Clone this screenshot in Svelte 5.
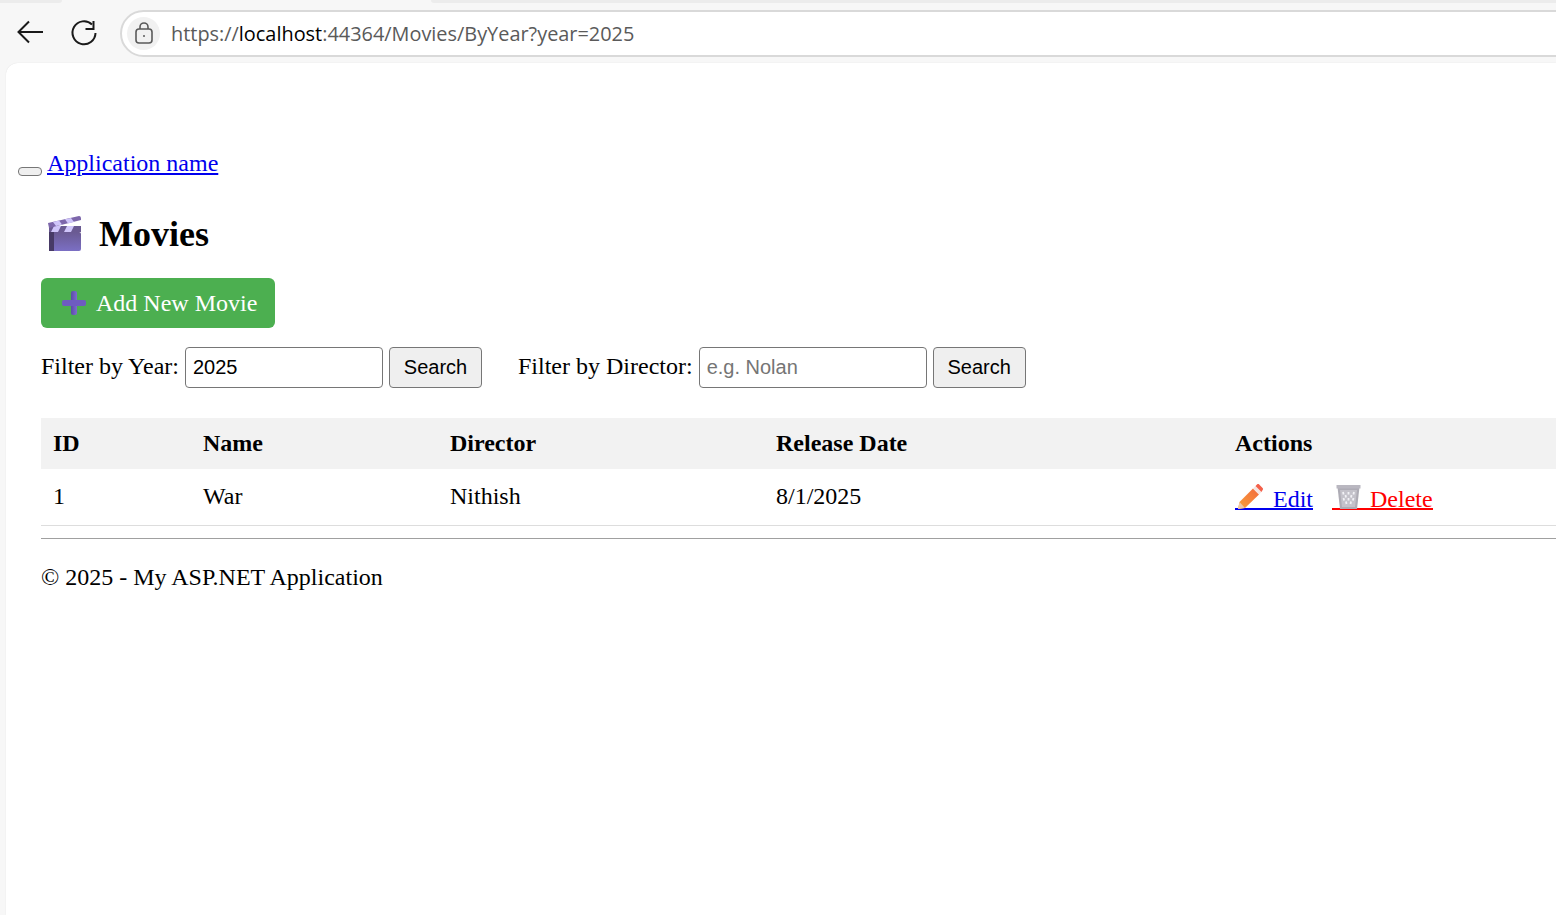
<script>
	const movies = [{ id: 1, name: "War", director: "Nithish", released: "8/1/2025" }];
</script>

<div class="window">
	<div class="tabstrip">
		<span class="tab first"></span>
		<span class="tab second"></span>
	</div>
	<div class="toolbar">
		<svg class="tool back" width="28" height="28" viewBox="0 0 28 28" fill="none" stroke="#1a1a1a" stroke-width="2">
			<path d="M27 13H3M13 2.500 2.500 13 13 23.500" />
		</svg>
		<svg class="tool reload" width="28" height="28" viewBox="0 0 28 28" fill="none" stroke="#1a1a1a" stroke-width="2">
			<path d="M22 5.500A11.500 11.500 0 1 0 25.500 14" />
			<path d="M23.500 2v8h-8" />
		</svg>
		<div class="address">
			<span class="lock">
				<svg width="20" height="22" viewBox="0 0 20 22" fill="none" stroke="#5a5a5a" stroke-width="1.6">
					<rect x="2" y="7" width="16" height="14" rx="3" />
					<path d="M6 7V5a4 4 0 0 1 8 0v2" />
					<circle cx="10" cy="14" r="1" fill="#5a5a5a" stroke="none" />
				</svg>
			</span>
			<span class="url">https://<b>localhost</b>:44364/Movies/ByYear?year=2025</span>
		</div>
	</div>

	<div class="page">
		<nav>
			<button class="toggle" aria-label="Toggle navigation"></button>
			<a href="#home">Application name</a>
		</nav>

		<main>
			<h1>
				<svg width="36" height="38" viewBox="0 0 36 38">
					<defs>
						<linearGradient id="board" x1="0" y1="0" x2="0" y2="1">
							<stop offset="0" stop-color="#6a5a92" />
							<stop offset="1" stop-color="#7b6fc4" />
						</linearGradient>
					</defs>
					<rect x="2" y="17" width="32" height="19" rx="2" fill="url(#board)" />
					<rect x="2" y="17" width="5" height="19" fill="#473a66" />
					<rect x="2" y="11" width="32" height="6" fill="#6a5a92" />
					<path d="M7 11h7l-3 6H4zM20 11h7l-3 6h-7z" fill="#cfc5fa" />
					<path d="M1 8 32 1c1.500 0 2 1 2 3v1L2 13z" fill="#7d67ab" />
					<path d="M6 7l6-1.400 3 4-6 1.500zM18 4.300l6-1.400 3 4-6 1.500z" fill="#cfc5fa" />
				</svg>
				<span>Movies</span>
			</h1>

			<a class="add" href="#add">
				<svg width="26" height="26" viewBox="0 0 26 26">
					<defs>
						<linearGradient id="plus" x1="0" y1="0" x2="1" y2="0">
							<stop offset="0" stop-color="#5b4ba6" />
							<stop offset="1" stop-color="#7d6bd0" />
						</linearGradient>
					</defs>
					<rect x="10" y="1" width="6" height="24" rx="2" fill="url(#plus)" />
					<rect x="1" y="10" width="24" height="6" rx="2" fill="#6e5cc0" />
				</svg>
				Add New Movie
			</a>

			<div class="filters">
				<form>
					<label for="year">Filter by Year:</label>
					<input id="year" class="year" value="2025" />
					<button type="button">Search</button>
				</form>
				<form>
					<label for="director">Filter by Director:</label>
					<input id="director" class="director" placeholder="e.g. Nolan" />
					<button type="button">Search</button>
				</form>
			</div>

			<table>
				<colgroup>
					<col class="c-id" /><col class="c-name" /><col class="c-director" /><col class="c-date" /><col class="c-actions" />
				</colgroup>
				<thead>
					<tr>
						<th>ID</th>
						<th>Name</th>
						<th>Director</th>
						<th>Release Date</th>
						<th>Actions</th>
					</tr>
				</thead>
				<tbody>
					{#each movies as movie}
						<tr>
							<td>{movie.id}</td>
							<td>{movie.name}</td>
							<td>{movie.director}</td>
							<td>{movie.released}</td>
							<td class="actions">
								<a class="edit" href="#edit">
									<svg width="32" height="26" viewBox="0 0 32 26">
										<defs>
											<linearGradient id="pencil" x1="0" y1="1" x2="1" y2="0">
												<stop offset="0" stop-color="#f9a13a" />
												<stop offset="1" stop-color="#f26a3d" />
											</linearGradient>
										</defs>
										<path d="M3 25l1.500-7L18 4.500l6 6L10 24z" fill="url(#pencil)" />
										<path d="M3 25l1.500-7 5.500 6z" fill="#eec8a8" />
										<path d="M18 4.500l2.500-2.500 6 6L24 10.500z" fill="#f5e4e0" />
										<path d="M20.500 2l1.500-1.500c.8-.6 1.500-.6 2.200 0l3.400 3.400c.6.700.6 1.500 0 2.200L26.500 8z" fill="#f4604a" />
									</svg>
									Edit</a>
								<a class="delete" href="#delete">
									<svg width="32" height="26" viewBox="1 0 32 26">
										<path d="M6.500 3h22l-2.500 22H9z" fill="#aeacb5" />
										<path d="M9 6h17l-2 17H11z" fill="#c4c2ca" />
										<path d="M5.500 1h24v3.500h-24z" fill="#b9b7c0" />
										<path d="M12 8l.6 2.500M17.500 8v2.500M23 8l-.6 2.500M14.500 11l.5 2.500M20.500 11l-.5 2.500M12.500 14l.6 2.500M17.500 14v2.500M22.500 14l-.6 2.500M15 17.500l.5 2.500M20 17.500l-.5 2.500" stroke="#f2f2f6" stroke-width="1.800" />
									</svg>
									Delete</a>
							</td>
						</tr>
					{/each}
				</tbody>
			</table>

			<hr />
			<footer>© 2025 - My ASP.NET Application</footer>
		</main>
	</div>
</div>

<style>
	:global(body) {
		margin: 0;
		overflow: hidden;
		background: #f7f7f7;
	}
	.window {
		height: 915px;
		width: 1556px;
		overflow: hidden;
		background: #f7f7f7;
		font-family: "Liberation Serif", "Times New Roman", serif;
		font-size: 24px;
		color: #000;
	}
	.tabstrip {
		position: relative;
		height: 3px;
		background: #f7f7f7;
	}
	.tab {
		position: absolute;
		top: 0;
		height: 3px;
		background: #ececec;
	}
	.tab.first {
		left: 0;
		width: 62px;
		border-radius: 0 0 4px 0;
	}
	.tab.second {
		left: 431px;
		right: 0;
		border-radius: 0 0 0 4px;
	}
	.toolbar {
		height: 60px;
		display: flex;
		align-items: center;
		box-sizing: border-box;
		padding-left: 16px;
	}
	.tool {
		flex: none;
	}
	.reload {
		margin-left: 26px;
	}
	.address {
		flex: none;
		width: 1500px;
		height: 47px;
		margin-left: 22px;
		box-sizing: border-box;
		border: 2px solid #d9d9d9;
		border-radius: 24px;
		background: #fff;
		display: flex;
		align-items: center;
		padding-left: 5px;
	}
	.lock {
		width: 33px;
		height: 33px;
		border-radius: 50%;
		background: #f1f1f1;
		display: flex;
		align-items: center;
		justify-content: center;
	}
	.url {
		margin-left: 11px;
		font-family: "Open Sans", sans-serif;
		font-size: 19.9px;
		color: #5a5a5a;
		white-space: nowrap;
	}
	.url b {
		font-weight: 400;
		color: #000;
	}
	.page {
		margin-left: 6px;
		height: 852px;
		background: #fff;
		border-top-left-radius: 12px;
		box-shadow: 0 0 1px #d8d8d8;
		overflow: hidden;
	}
	nav {
		padding: 86px 0 0 12px;
		display: flex;
		align-items: flex-end;
		gap: 5px;
		line-height: 29px;
	}
	.toggle {
		width: 24px;
		height: 9px;
		padding: 0;
		margin-bottom: 2px;
		box-sizing: border-box;
		border: 1.5px solid #767676;
		border-radius: 4px;
		background: #efefef;
	}
	a {
		color: #00e;
	}
	main {
		padding: 0 0 0 35px;
	}
	h1 {
		margin: 33px 0 0;
		padding-left: 6px;
		display: flex;
		align-items: center;
		gap: 16px;
		font-size: 36px;
		line-height: 46px;
	}
	.add {
		margin-top: 21px;
		width: 234px;
		height: 50px;
		box-sizing: border-box;
		padding-left: 20px;
		display: flex;
		align-items: center;
		gap: 9px;
		background: #4caf50;
		border-radius: 6px;
		color: #fff;
		text-decoration: none;
	}
	.filters {
		margin-top: 19px;
		display: flex;
		gap: 36px;
	}
	form {
		display: flex;
		align-items: center;
		gap: 6px;
	}
	label {
		margin-bottom: 2px;
	}
	input,
	form button {
		box-sizing: border-box;
		height: 41px;
		font-family: "Liberation Sans", Arial, sans-serif;
		font-size: 20px;
		border: 1.5px solid #767676;
		border-radius: 4px;
		color: #000;
	}
	input {
		padding: 0 7px;
		background: #fff;
	}
	input::placeholder {
		color: #757575;
	}
	.year {
		width: 198px;
	}
	.director {
		width: 228px;
	}
	form button {
		width: 93px;
		padding: 0;
		background: #efefef;
	}
	table {
		margin-top: 30px;
		width: 1700px;
		table-layout: fixed;
		border-collapse: collapse;
		font-size: 24px;
	}
	.c-id { width: 150px; }
	.c-name { width: 247px; }
	.c-director { width: 326px; }
	.c-date { width: 459px; }
	th {
		height: 51px;
		padding: 0 12px;
		box-sizing: border-box;
		background: #f2f2f2;
		text-align: left;
	}
	td {
		height: 56px;
		padding: 0 12px;
		box-sizing: border-box;
		border-bottom: 1.5px solid #ddd;
	}
	.actions {
		padding-top: 3px;
	}
	.actions a {
		margin-right: 13px;
		text-decoration: none;
		background: linear-gradient(currentColor, currentColor) left bottom 2px / 100% 2px no-repeat;
	}
	.actions svg {
		vertical-align: -3px;
	}
	.actions .delete {
		color: #f00;
	}
	hr {
		margin: 12px 0 0;
		border: none;
		border-top: 1.5px solid #a0a0a0;
	}
	footer {
		margin-top: 24px;
		line-height: 28px;
	}
</style>
